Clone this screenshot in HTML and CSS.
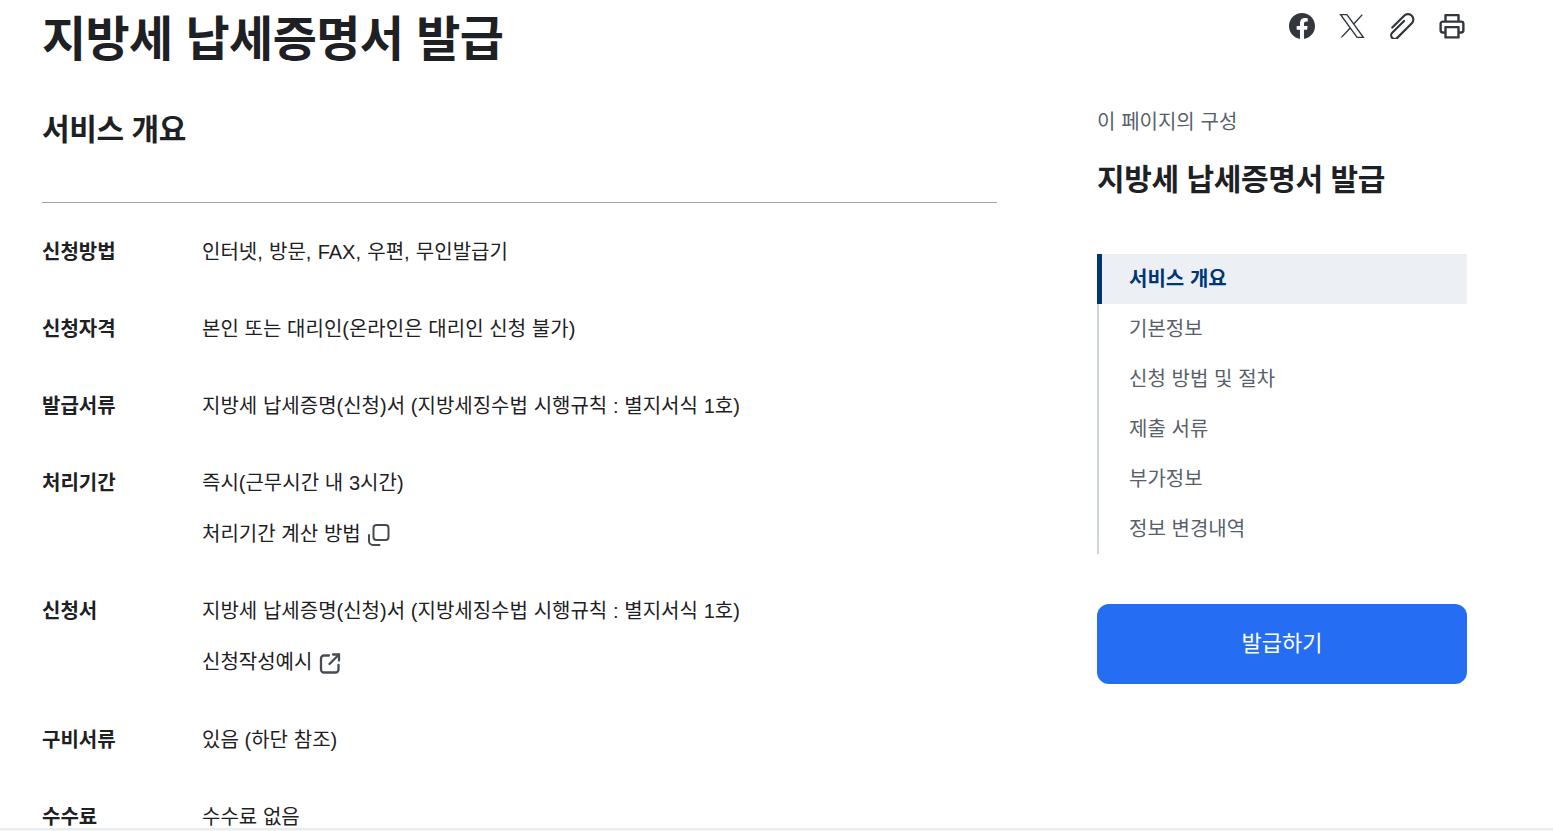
FILE: index.html
```html
<!DOCTYPE html>
<html lang="ko">
<head>
<meta charset="utf-8">
<title>지방세 납세증명서 발급</title>
<link rel="stylesheet" href="styles.css">
</head>
<body>
<div class="page">
  <main class="main">
    <h1 class="title">지방세 납세증명서 발급</h1>
    <h2 class="section-title">서비스 개요</h2>
    <dl class="info">
      <div class="row"><dt>신청방법</dt><dd class="list-text"><p>인터넷, 방문, FAX, 우편, 무인발급기</p></dd></div>
      <div class="row"><dt>신청자격</dt><dd><p>본인 또는 대리인(온라인은 대리인 신청 불가)</p></dd></div>
      <div class="row"><dt>발급서류</dt><dd><p>지방세 납세증명(신청)서 (지방세징수법 시행규칙 : 별지서식 1호)</p></dd></div>
      <div class="row"><dt>처리기간</dt><dd><p>즉시(근무시간 내 3시간)</p>
        <p class="link">처리기간 계산 방법
          <svg class="link-icon" viewBox="0 0 22 22" fill="none" stroke="#464c53" stroke-width="2" stroke-linecap="round" stroke-linejoin="round"><rect x="5.500" y="1" width="15" height="15" rx="3"/><path d="M1 11V17a4 4 0 0 0 4 4h6.500"/></svg></p></dd></div>
      <div class="row"><dt>신청서</dt><dd><p>지방세 납세증명(신청)서 (지방세징수법 시행규칙 : 별지서식 1호)</p>
        <p class="link link-external">신청작성예시
          <svg class="link-icon" viewBox="0 0 22 22" fill="none" stroke="#464c53" stroke-width="2.300" stroke-linecap="round" stroke-linejoin="round"><path d="M10 3.500H5A3 3 0 0 0 2 6.500V17.500a3 3 0 0 0 3 3h11.500a3 3 0 0 0 3-3V13"/><path d="M14 2.500H20V8.500"/><path d="M20 2.500L10.500 12"/></svg></p></dd></div>
      <div class="row"><dt>구비서류</dt><dd><p>있음 (하단 참조)</p></dd></div>
      <div class="row"><dt>수수료</dt><dd><p>수수료 없음</p></dd></div>
    </dl>
  </main>
  <aside class="side">
    <div class="share">
      <svg class="share-icon" viewBox="0 0 24 24"><path fill="#33363d" d="M24 12.070C24 5.400 18.630 0 12 0S0 5.400 0 12.070c0 6.030 4.390 11.020 10.130 11.930v-8.440H7.080v-3.490h3.050V9.410c0-3.020 1.790-4.690 4.530-4.690 1.310 0 2.680.24 2.680.24v2.970h-1.510c-1.490 0-1.960.93-1.960 1.880v2.260h3.330l-.53 3.490h-2.800V24C19.610 23.090 24 18.100 24 12.070z"/></svg>
      <svg class="share-icon" viewBox="0 0 24 24"><path fill="none" stroke="#33363d" stroke-width="1.300" d="M1.500 1.500h5.800l15.200 21h-5.800zM21.500 1.500L13.200 10.700M10.800 13.400L2.200 22.500"/></svg>
      <svg class="share-icon" viewBox="0 0 24 24" fill="none" stroke="#33363d" stroke-width="2" stroke-linecap="round" stroke-linejoin="round"><path transform="rotate(45 11.500 12)" d="M6.500 19V3.500a5 5 0 0 1 10 0V22.500a3.300 3.300 0 0 1-6.600 0V7"/></svg>
      <svg class="share-icon" viewBox="0 0 24 24" fill="none" stroke="#33363d" stroke-width="2.200" stroke-linejoin="round"><path d="M6 8V2h12v6"/><path d="M6 18H3.500A2 2 0 0 1 1.500 16v-6a2 2 0 0 1 2-2h17a2 2 0 0 1 2 2v6a2 2 0 0 1-2 2H18"/><rect x="6" y="13" width="12" height="9.500"/></svg>
    </div>
    <p class="toc-label">이 페이지의 구성</p>
    <h2 class="toc-title">지방세 납세증명서 발급</h2>
    <nav class="toc">
      <a class="toc-item active">서비스 개요</a>
      <a class="toc-item">기본정보</a>
      <a class="toc-item">신청 방법 및 절차</a>
      <a class="toc-item">제출 서류</a>
      <a class="toc-item">부가정보</a>
      <a class="toc-item">정보 변경내역</a>
    </nav>
    <button class="issue">발급하기</button>
  </aside>
</div>
<div class="bottom-edge"></div>
</body>
</html>
```
FILE: styles.css
```css
* { box-sizing: border-box; }
html, body { margin: 0; height: 831px; overflow: hidden; background: #fff; }
body { font-family: "Liberation Sans", "Noto Sans CJK KR", sans-serif; color: #1e2124; font-size: 20px; line-height: 30px; word-spacing: 0.2px; position: relative; }
.page { display: flex; gap: 100px; padding: 0 86px 0 42px; align-items: flex-start; }
.main { width: 955px; flex: none; }
.title, .section-title, .toc-title { font-family: "Noto Sans CJK KR", sans-serif; font-weight: 700; word-spacing: 0; }
.title { margin: 0; font-size: 48px; line-height: 70px; height: 76px; letter-spacing: -0.6px; color: #1e2124; }
.section-title { margin: 32px 0 0; font-size: 30px; line-height: 38px; height: 95px; letter-spacing: -0.4px; border-bottom: 1px solid #a0a4a8; }
.info { margin: 34px 0 0; }
.row { display: flex; margin-bottom: 47px; }
.row dt { width: 160px; flex: none; font-weight: 700; }
.row dd { margin: 0; display: flex; flex-direction: column; gap: 21px; }
.row dd.list-text { word-spacing: 0.7px; }
.row p { margin: 0; }
.link { display: flex; align-items: center; gap: 7px; }
.link-external { margin-top: 2px; padding-bottom: 1px; }
.link-icon { width: 22px; height: 22px; flex: none; margin-top: 2px; }
.side { width: 370px; flex: none; }
.share { display: flex; justify-content: flex-end; gap: 24px; padding: 13px 2px 0 0; height: 107px; }
.share-icon { width: 26px; height: 26px; }
.toc-label { margin: 0; color: #58616a; }
.toc-title { margin: 21px 0 0; font-size: 30px; line-height: 38px; height: 40px; letter-spacing: -0.4px; }
.toc { margin-top: 56px; display: flex; flex-direction: column; border-left: 2px solid #cdd6e0; }
.toc-item { height: 50px; display: flex; align-items: center; padding-left: 30px; color: #58616a; }
.toc-item.active { margin-left: -2px; padding-left: 27px; border-left: 5px solid #003675; background: #eceff4; color: #003675; font-weight: 700; }
.issue { display: block; width: 100%; height: 80px; margin-top: 50px; border: 0; border-radius: 12px; background: #256ef4; color: #fff; font: inherit; font-size: 22px; padding-bottom: 2px; }
.bottom-edge { position: absolute; left: 0; right: 0; top: 828px; height: 3px; background: linear-gradient(#e6e8ea, #f4f5f6); }
```
